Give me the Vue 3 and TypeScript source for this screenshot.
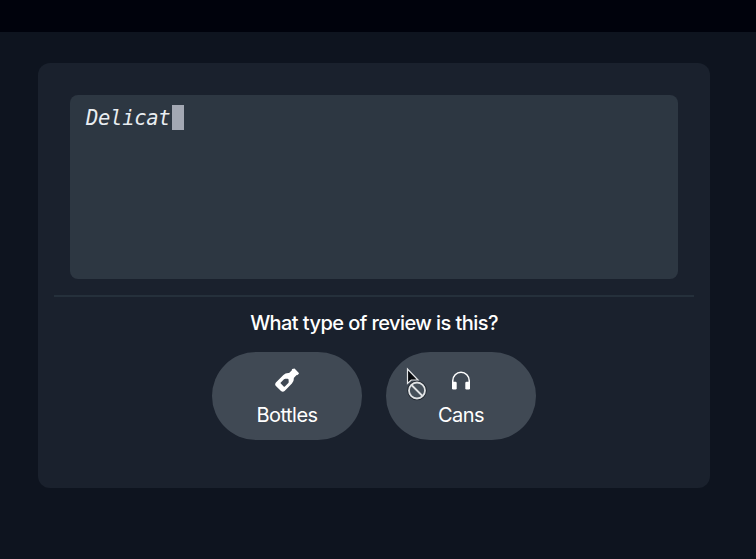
<script setup lang="ts">
import { ref } from 'vue'

type Kind = 'bottles' | 'cans'
interface Choice { kind: Kind; label: string }

const review = ref<string>('Delicat')
const choices: Choice[] = [
  { kind: 'bottles', label: 'Bottles' },
  { kind: 'cans', label: 'Cans' },
]
</script>

<template>
  <div class="page">
    <header class="topbar"></header>
    <main class="card">
      <div class="editor"><span class="typed">{{ review }}</span><span class="caret"></span></div>
      <div class="divider"></div>
      <h2 class="question">What type of review is this?</h2>
      <div class="choices">
        <button v-for="c in choices" :key="c.kind" class="choice" type="button">
          <svg v-if="c.kind === 'bottles'" class="icon" viewBox="0 0 24 24">
            <path fill="#fff" fill-rule="evenodd" d="M18.5.8q.7-.7 1.300 0l3.800 3.900q.7.6 0 1.300l-.8.8q-.5.5-1.200.3l-2.800 2.800q.3 3.500-1.900 5.700l-7.300 7.500q-1.800 1.500-3.600 0l-5.100-5.100q-1.500-1.800 0-3.600l7.500-7.400q2.200-2.200 5.700-1.900l2.800-2.800q-.2-.7.3-1.200zM9 11.200l-3.200 3.200q-.6.6 0 1.200l2.900 2.900q.6.6 1.200 0l3.200-3.200q.6-.6.600-1.300l-.1-2.200q-.1-.9-1-1l-2.200-.100q-.8 0-1.400.5z" />
          </svg>
          <svg v-else class="icon" viewBox="0 0 24 24">
            <path fill="none" stroke="#fff" stroke-width="1.5" d="M3.750 17v-4.200a8.250 8.500 0 0 1 16.500 0V17" />
            <rect x="3" y="13.800" width="4.700" height="7.600" rx="1.200" fill="#fff" />
            <rect x="16.300" y="13.800" width="4.700" height="7.600" rx="1.200" fill="#fff" />
          </svg>
          <span class="label">{{ c.label }}</span>
        </button>
      </div>
    </main>
    <svg class="pointer" viewBox="0 0 26 38">
      <path fill="#07090d" stroke="#e4e6e8" stroke-width="1.2" d="M3.500 4v14.500l3.800-3.500h6.700z" />
      <circle cx="13" cy="25.500" r="8.300" fill="#46505a" stroke="#20272f" stroke-width="3" />
      <circle cx="13" cy="25.500" r="8" fill="#46505a" stroke="#e1e3e5" stroke-width="1.800" />
      <path stroke="#e1e3e5" stroke-width="1.800" d="M7.500 20l11 11" />
    </svg>
  </div>
</template>

<style>
body { margin: 0; background: #0e141f; }
</style>

<style scoped>
.page {
  position: relative;
  box-sizing: border-box;
  height: 559px;
  overflow: hidden;
  background: #0e141f;
  color: #fff;
  font-family: Inter, "Liberation Sans", sans-serif;
}
.topbar { height: 32px; background: #00020c; }
.card {
  box-sizing: border-box;
  width: 672px;
  height: 425px;
  margin: 31.4px 0 0 38px;
  padding: 32px 16px;
  border-radius: 12px;
  background: #1a212d;
}
.editor {
  box-sizing: border-box;
  display: flex;
  align-items: flex-start;
  height: 184px;
  margin: 0 16px;
  padding: 10px 16px;
  border-radius: 8px;
  background: #2d3742;
}
.typed {
  color: #e9edf1;
  font: italic 20.5px/26px "DejaVu Sans Mono", monospace;
  letter-spacing: -0.3px;
}
.caret { width: 12px; height: 24.5px; margin-left: 2px; background: #a3a8b3; }
.divider { height: 2px; margin-top: 15.6px; background: #25303b; }
.question {
  margin: 12px 0 0;
  text-align: center;
  font-size: 20px;
  line-height: 28px;
  font-weight: 500;
  letter-spacing: -0.57px;
}
.choices { display: flex; justify-content: center; gap: 24px; margin-top: 15px; }
.choice {
  display: flex;
  flex-direction: column;
  align-items: center;
  width: 150px;
  height: 88px;
  padding: 16px 0 0;
  border: 0;
  border-radius: 44px;
  background: #404954;
  color: #fff;
  font-family: inherit;
}
.icon { width: 24px; height: 24px; }
.label { margin-top: 9px; font-size: 20px; line-height: 28px; letter-spacing: -0.5px; }
.pointer { position: absolute; left: 404px; top: 365px; width: 26px; height: 38px; }
</style>
